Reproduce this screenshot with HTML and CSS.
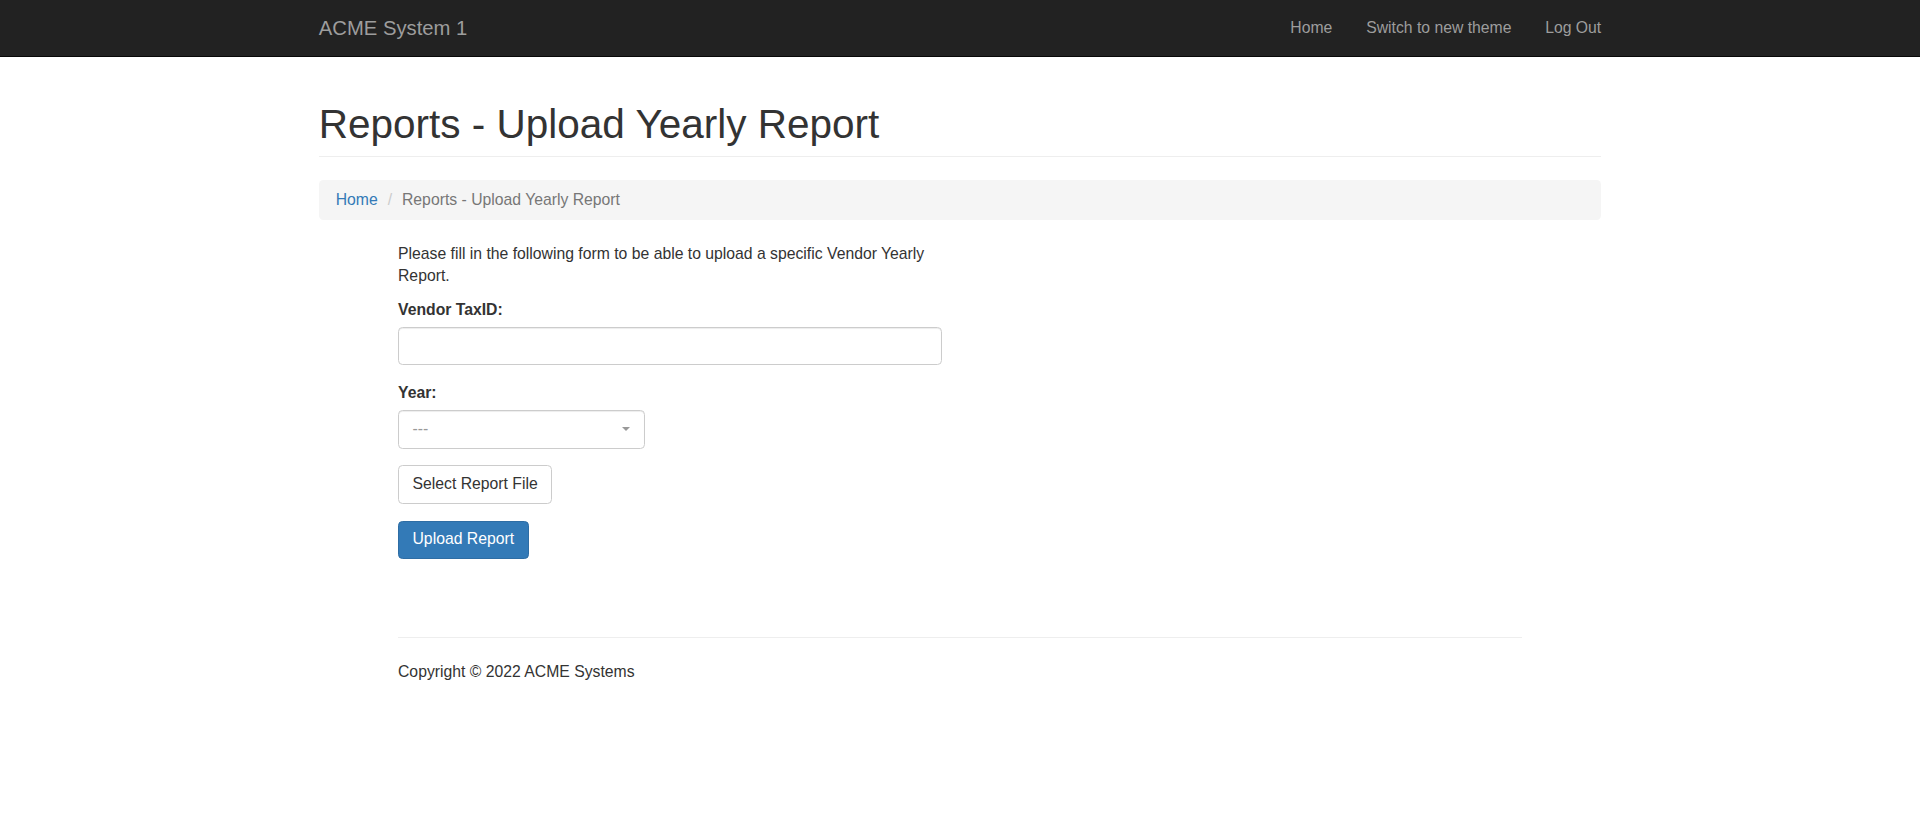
FILE: index.html
```html
<!DOCTYPE html>
<html lang="en">
<head>
<meta charset="utf-8">
<title>Reports - Upload Yearly Report</title>
<link rel="stylesheet" href="styles.css">
</head>
<body>
<nav class="navbar">
  <div class="container navbar-inner">
    <a class="brand" href="#">ACME System 1</a>
    <ul class="nav">
      <li><a href="#">Home</a></li>
      <li><a href="#">Switch to new theme</a></li>
      <li><a href="#">Log Out</a></li>
    </ul>
  </div>
</nav>
<main class="container">
  <h1 class="page-header">Reports - Upload Yearly Report</h1>
  <ol class="breadcrumb">
    <li><a href="#">Home</a></li>
    <li class="active">Reports - Upload Yearly Report</li>
  </ol>
  <div class="body-wrap">
    <form class="upload-form">
      <p class="intro">Please fill in the following form to be able to upload a specific Vendor Yearly Report.</p>
      <div class="form-group">
        <label class="control-label">Vendor TaxID:</label>
        <input class="form-control" type="text">
      </div>
      <div class="form-group">
        <label class="control-label">Year:</label>
        <div class="select-box">
          <span class="select-placeholder">---</span>
          <b class="select-arrow"></b>
        </div>
      </div>
      <div class="form-group">
        <button type="button" class="btn btn-default">Select Report File</button>
      </div>
      <div class="form-group">
        <button type="button" class="btn btn-primary">Upload Report</button>
      </div>
    </form>
    <footer class="footer">
      <hr class="footer-rule">
      <p>Copyright © 2022 ACME Systems</p>
    </footer>
  </div>
</main>
</body>
</html>
```

FILE: styles.css
```css
* {
  box-sizing: border-box;
}

html, body {
  margin: 0;
  padding: 0;
}

body {
  font-family: "Liberation Sans", Arial, Helvetica, sans-serif;
  font-size: 15.75px;
  line-height: 22.5px;
  color: #333;
  background: #fff;
}

a {
  text-decoration: none;
}

.container {
  width: 1316.25px;
  margin: 0 auto;
  padding: 0 16.875px;
}

/* Navbar */
.navbar {
  background: #222;
  border-bottom: 1px solid #080808;
}

.navbar-inner {
  display: flex;
  align-items: center;
  height: 56px;
}

.brand {
  color: #9d9d9d;
  font-size: 20.25px;
  line-height: 22.5px;
  padding: 16.875px 0;
}

.nav {
  display: flex;
  list-style: none;
  margin: 0 -16.875px 0 auto;
  padding: 0;
}

.nav a {
  display: block;
  color: #9d9d9d;
  padding: 16.875px;
  line-height: 22.5px;
}

/* Header */
.page-header {
  margin: 44.5px 0 22.5px;
  padding-bottom: 10.125px;
  border-bottom: 1px solid #eee;
  font-size: 40.5px;
  line-height: 44.55px;
  font-weight: 500;
  color: #333;
}

.breadcrumb {
  list-style: none;
  margin: 0 0 22.5px;
  padding: 9px 16.875px;
  background: #f5f5f5;
  border-radius: 4.5px;
  display: flex;
}

.breadcrumb a {
  color: #337ab7;
}

.breadcrumb li + li {
  margin-left: 4.4px;
}

.breadcrumb li + li::before {
  content: "/\00a0";
  padding: 0 5.6px;
  color: #ccc;
}

.breadcrumb .active {
  color: #777;
}

/* Body */
.body-wrap {
  width: 1124px;
  margin: 0 auto;
}

.upload-form {
  width: 544px;
  padding-bottom: 39.3px;
}

.intro {
  margin: 0 0 11.25px;
}

.form-group {
  margin-bottom: 16.875px;
}

.control-label {
  display: inline-block;
  margin-bottom: 5.625px;
  font-weight: bold;
}

.form-control {
  display: block;
  width: 100%;
  height: 38.25px;
  padding: 6.75px 13.5px;
  font: inherit;
  color: #555;
  background: #fff;
  border: 1px solid #ccc;
  border-radius: 4.5px;
  box-shadow: inset 0 1px 1px rgba(0, 0, 0, .075);
}

.select-box {
  position: relative;
  width: 247px;
  height: 38.25px;
  padding: 6.75px 13.5px;
  border: 1px solid #ccc;
  border-radius: 4.5px;
  background: #fff;
  box-shadow: inset 0 1px 1px rgba(0, 0, 0, .075);
}

.select-placeholder {
  color: #999;
}

.select-arrow {
  position: absolute;
  top: 50%;
  right: 14px;
  margin-top: -2px;
  width: 0;
  height: 0;
  border-style: solid;
  border-width: 4.5px 4.5px 0;
  border-color: #999 transparent transparent;
}

.btn {
  display: inline-block;
  height: 38.25px;
  padding: 6.75px 13.5px;
  font: inherit;
  line-height: 22.5px;
  border: 1px solid transparent;
  border-radius: 4.5px;
  cursor: pointer;
}

.btn-default {
  color: #333;
  background: #fff;
  border-color: #ccc;
}

.btn-primary {
  color: #fff;
  background: #337ab7;
  border-color: #2e6da4;
}

/* Footer */
.footer-rule {
  margin: 22.5px 0;
  border: 0;
  border-top: 1px solid #eee;
}

.footer p {
  margin: 0 0 11.25px;
}
```
